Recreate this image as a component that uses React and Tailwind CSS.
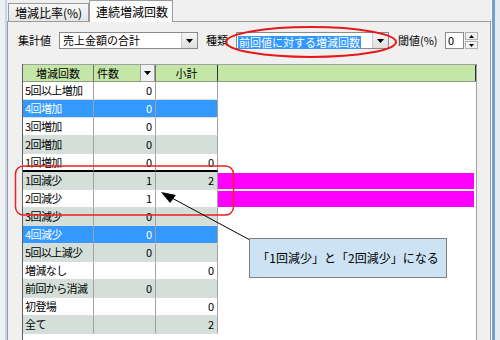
const rows = [
  { label: '5回以上増加', count: '0', sub: '', tone: 'white' },
  { label: '4回増加', count: '0', sub: '', tone: 'sel' },
  { label: '3回増加', count: '0', sub: '', tone: 'white' },
  { label: '2回増加', count: '0', sub: '', tone: 'gray' },
  { label: '1回増加', count: '0', sub: '0', tone: 'white', split: true },
  { label: '1回減少', count: '1', sub: '2', tone: 'gray', bar: true },
  { label: '2回減少', count: '1', sub: '', tone: 'white', bar: true },
  { label: '3回減少', count: '0', sub: '', tone: 'gray' },
  { label: '4回減少', count: '0', sub: '', tone: 'sel' },
  { label: '5回以上減少', count: '0', sub: '', tone: 'gray' },
  { label: '増減なし', count: '', sub: '0', tone: 'white' },
  { label: '前回から消滅', count: '0', sub: '', tone: 'gray' },
  { label: '初登場', count: '', sub: '0', tone: 'white' },
  { label: '全て', count: '', sub: '2', tone: 'gray' },
]

const toneCls = {
  white: 'bg-white text-black',
  gray: 'bg-[#d3dfd8] text-black',
  sel: 'bg-[#3399ff] text-white',
}

function DownArrow() {
  return (
    <svg width="7" height="4" viewBox="0 0 7 4">
      <path d="M0 0h7L3.5 4z" fill="#000" />
    </svg>
  )
}

function DropButton() {
  return (
    <div className="w-[16px] h-full flex items-center justify-center border-l border-[#c8c8c8] bg-gradient-to-b from-[#f6f6f6] to-[#dedede]">
      <DownArrow />
    </div>
  )
}

function GridRow({ row }) {
  const tone = toneCls[row.tone]
  const line = row.split ? 'border-b-2 border-b-black' : 'border-b border-b-[#dcdcdc]'
  return (
    <div className="flex h-[18px] leading-[17px]">
      <div className={`w-[71px] pl-[2px] border-r border-r-[#a0a0a0] whitespace-nowrap tracking-[-0.6px] ${line} ${tone}`}>
        {row.label}
      </div>
      <div className={`w-[62px] pr-[3px] text-right border-r border-r-[#a0a0a0] ${line} ${tone}`}>
        {row.count}
      </div>
      <div className={`w-[62px] pr-[3px] text-right border-r border-r-[#a0a0a0] ${line} ${tone}`}>
        {row.sub}
      </div>
      <div className="w-[258px] bg-white pt-[1px] pr-[2px]">
        {row.bar && <div className="h-[16px] bg-[#ff00ff]" />}
      </div>
    </div>
  )
}

export default function App() {
  return (
    <div className="w-[500px] h-[340px] relative overflow-hidden bg-[#f0f0f0] flex text-[11px] text-black font-['Noto_Sans_CJK_JP','Liberation_Sans',sans-serif]">
      {/* window frame, left */}
      <div className="w-[7px] flex">
        <div className="w-[5px] bg-[#eef0f2]" />
        <div className="w-[2px] bg-[#c4d6ea]" />
      </div>

      <div className="w-[484px] flex flex-col">
        {/* tabs */}
        <div className="h-[21px] flex items-end relative z-10 text-[12px]">
          <div className="w-[81px] h-[18px] ml-[1px] border border-b-0 border-[#9a9a9a] bg-gradient-to-b from-[#f6f6f6] to-[#e6e6e6] pl-[6px] leading-[17px] whitespace-nowrap">
            増減比率(%)
          </div>
          <div className="w-[84px] h-[22px] -mb-[1px] border border-b-0 border-[#9a9a9a] bg-[#fbfbfb] pl-[6px] leading-[21px] whitespace-nowrap">
            連続増減回数
          </div>
        </div>

        {/* tab page */}
        <div className="flex-1 flex flex-col border-t border-l border-r border-[#9a9a9a] bg-[#f0f0f0]">
          <div className="flex items-center h-[17px] mt-[10px] ml-[10px]">
            <span className="w-[41px] whitespace-nowrap">集計値</span>
            <div className="w-[139px] h-[17px] flex border border-[#8a8a8a] bg-white">
              <span className="flex-1 pl-[3px] leading-[15px] whitespace-nowrap">売上金額の合計</span>
              <DropButton />
            </div>
            <span className="w-[30px] ml-[8px] whitespace-nowrap">種類</span>
            <div className="w-[153px] h-[17px] flex border border-[#8a8a8a] bg-white">
              <div className="flex-1 p-[1px]">
                <span className="inline-block h-full pl-[1px] pr-[1px] leading-[13px] bg-[#3399ff] text-white whitespace-nowrap">
                  前回値に対する増減回数
                </span>
              </div>
              <DropButton />
            </div>
            <span className="w-[47px] ml-[9px] whitespace-nowrap">閾値(%)</span>
            <div className="w-[19px] h-[17px] border border-[#8a8a8a] bg-white pl-[2px] leading-[15px]">0</div>
            <div className="w-[13px] h-[17px] ml-[1px] flex flex-col gap-[1px]">
              <div className="flex-1 flex items-center justify-center border border-[#b0b0b0] bg-[#f2f2f2]">
                <svg width="5" height="3" viewBox="0 0 5 3">
                  <path d="M0 3h5L2.5 0z" fill="#000" />
                </svg>
              </div>
              <div className="flex-1 flex items-center justify-center border border-[#b0b0b0] bg-[#f2f2f2]">
                <svg width="5" height="3" viewBox="0 0 5 3">
                  <path d="M0 0h5L2.5 3z" fill="#000" />
                </svg>
              </div>
            </div>
          </div>

          {/* grid */}
          <div className="w-[455px] flex-1 mt-[15px] ml-[14px] border-l border-r border-l-[#606060] border-r-[#a0a0a0] bg-white">
            <div className="flex h-[18px] leading-[16px] bg-[#c4e6a6] border-t border-t-[#a0a0a0] border-b border-b-[#8a9a80]">
              <div className="w-[71px] text-center border-r border-r-[#707070]">増減回数</div>
              <div className="w-[62px] flex border-r border-r-[#707070]">
                <span className="flex-1 pl-[3px]">件数</span>
                <div className="w-[15px] my-[-1px] flex items-center justify-center border border-[#a0a0a0] bg-[#f0f0f0]">
                  <DownArrow />
                </div>
              </div>
              <div className="w-[62px] text-center border-r border-r-[#303030]">小計</div>
              <div className="w-[258px] border-r border-r-[#303030]" />
            </div>
            {rows.map((row) => (
              <GridRow key={row.label} row={row} />
            ))}
          </div>
        </div>
      </div>

      {/* window frame, right */}
      <div className="w-[9px] flex">
        <div className="w-[1px] bg-white" />
        <div className="w-[3px] bg-[#6fa0d8]" />
        <div className="flex-1 bg-[#e8ecf0]" />
      </div>

      {/* annotations */}
      <svg className="absolute inset-0 pointer-events-none" width="500" height="340" viewBox="0 0 500 340">
        <ellipse cx="311" cy="42" rx="85" ry="15" fill="none" stroke="#e81818" strokeWidth="2" />
        <rect x="15.5" y="166" width="218" height="49" rx="8" fill="none" stroke="#ee2020" strokeWidth="1.5" />
        <line x1="250" y1="240" x2="170" y2="197" stroke="#000" strokeWidth="1" />
        <path d="M161 192L176 195L170 203z" fill="#000" />
      </svg>
      <div className="absolute left-[249px] top-[238px] w-[198px] h-[40px] bg-[#cde3f4] border border-[#7f7f7f] flex items-center justify-center whitespace-nowrap text-[12px]">
        「1回減少」と「2回減少」になる
      </div>
    </div>
  )
}
